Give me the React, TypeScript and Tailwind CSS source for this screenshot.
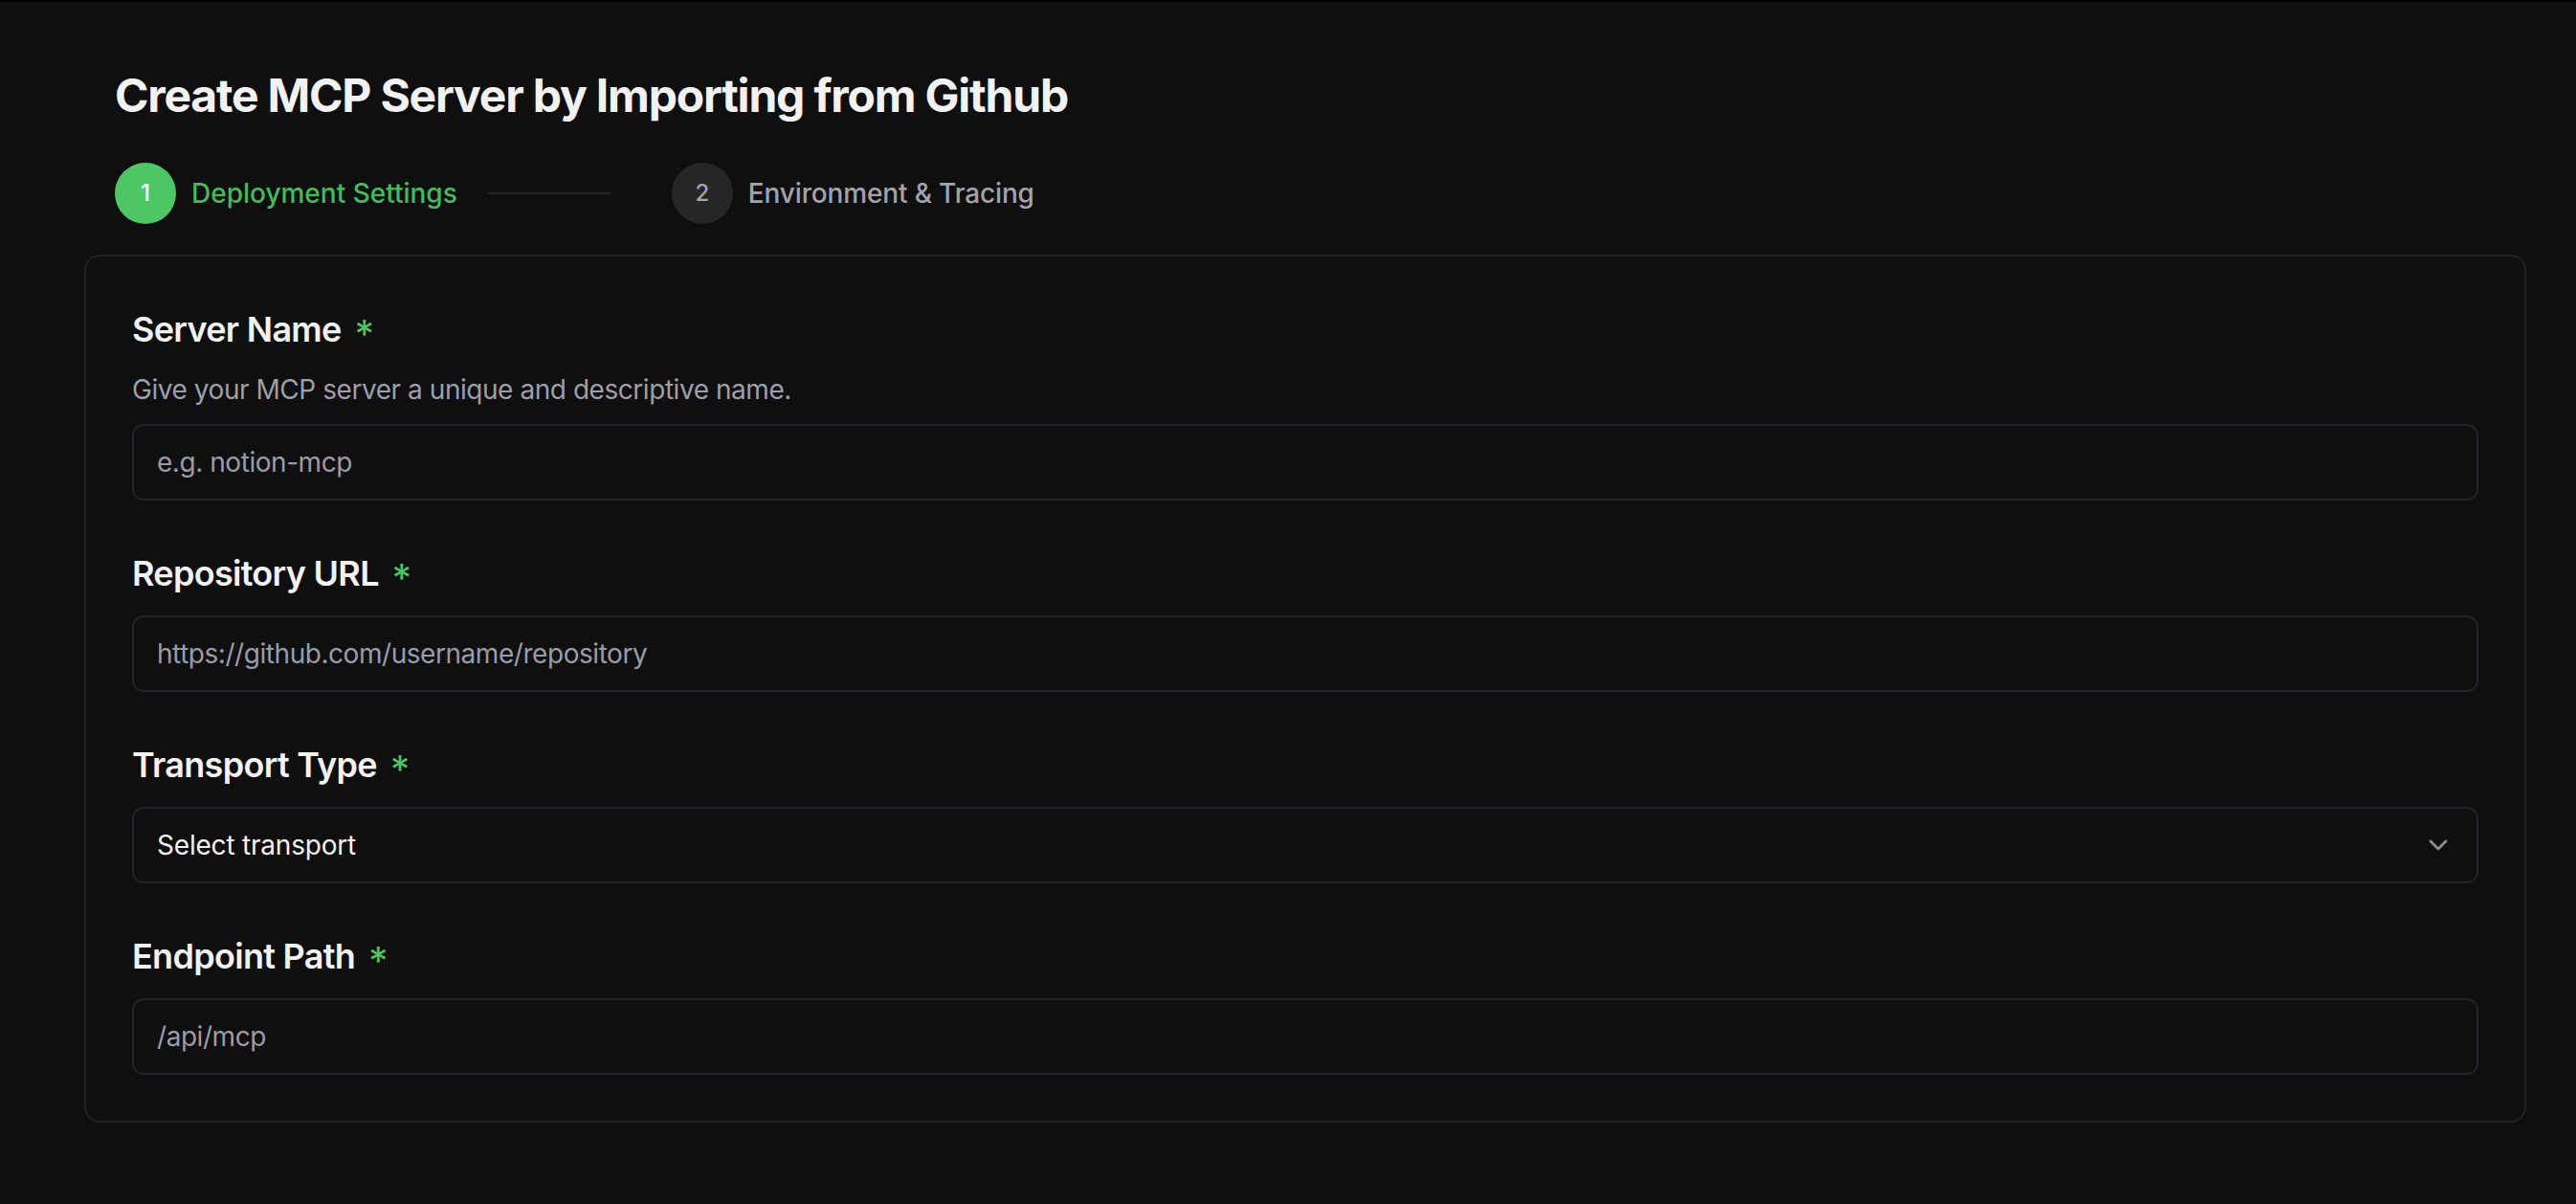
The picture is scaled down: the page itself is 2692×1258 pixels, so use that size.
import React from "react";
import { ChevronDown } from "lucide-react";

interface FieldProps {
  label: string;
  description?: string;
  children: React.ReactNode;
}

const Field: React.FC<FieldProps> = ({ label, description, children }) => (
  <div className="flex flex-col">
    <label className="flex items-center text-[36px] leading-[56px] font-semibold text-[#f2f2f2] tracking-[-0.7px]">
      {label}
      <span className="ml-[14px] text-[#4cc764] text-[40px] font-normal translate-y-[5px]">*</span>
    </label>
    {description && (
      <p className="mt-[15px] text-[28px] leading-[40px] text-[#9d9fa9] tracking-[-0.45px]">{description}</p>
    )}
    <div className="mt-[16px]">{children}</div>
  </div>
);

const TextInput: React.FC<{ placeholder: string }> = ({ placeholder }) => (
  <input
    type="text"
    placeholder={placeholder}
    className="w-full h-[80px] rounded-[12px] border-2 border-[#24242a] bg-transparent px-[24px] text-[28px] tracking-[-0.45px] text-[#f2f2f2] placeholder:text-[#9a9ca7] outline-none"
  />
);

const StepCircle: React.FC<{ n: number; active?: boolean }> = ({ n, active = false }) => (
  <div
    className={`flex h-[64px] w-[64px] items-center justify-center rounded-full text-[24px] font-medium ${
      active ? "bg-[#4cc764] text-white" : "bg-[#262626] text-[#a1a3ad]"
    }`}
  >
    {n}
  </div>
);

export default function App() {
  return (
    <div className="min-h-screen bg-[#0f0f0f] border-t-2 border-black font-[Inter,'Noto_Sans',sans-serif] pl-[88px] pr-[52px] pt-[66px] pb-[80px]">
      <header className="pl-[32px]">
        <h1 className="text-[48px] leading-[64px] font-bold text-[#f2f2f2] tracking-[-1.2px]">
          Create MCP Server by Importing from Github
        </h1>

        <div className="mt-[38px] flex items-center">
          <StepCircle n={1} active />
          <span className="ml-[16px] text-[28px] font-medium text-[#45b95c]">Deployment Settings</span>
          <div className="ml-[32px] mr-[64px] h-[2px] w-[128px] bg-[#262626]" />
          <StepCircle n={2} />
          <span className="ml-[16px] text-[28px] font-medium text-[#a1a3ad] tracking-[-0.15px]">Environment &amp; Tracing</span>
        </div>
      </header>

      <section className="mt-[32px] rounded-[16px] border-2 border-[#222226] p-[48px] flex flex-col gap-[48px]">
        <Field label="Server Name" description="Give your MCP server a unique and descriptive name.">
          <TextInput placeholder="e.g. notion-mcp" />
        </Field>

        <Field label="Repository URL">
          <TextInput placeholder="https://github.com/username/repository" />
        </Field>

        <Field label="Transport Type">
          <button
            type="button"
            className="flex w-full h-[80px] items-center justify-between rounded-[12px] border-2 border-[#24242a] bg-transparent px-[24px] text-[28px] tracking-[-0.2px] text-[#f2f2f2]"
          >
            <span>Select transport</span>
            <ChevronDown size={32} strokeWidth={2} className="text-[#8f8f8f]" />
          </button>
        </Field>

        <Field label="Endpoint Path">
          <TextInput placeholder="/api/mcp" />
        </Field>
      </section>
    </div>
  );
}
